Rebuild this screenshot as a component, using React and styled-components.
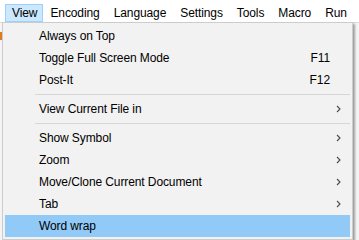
import React from "react";
import styled, { createGlobalStyle } from "styled-components";

const GlobalStyle = createGlobalStyle`
  html, body {
    margin: 0;
    padding: 0;
    background: #ffffff;
  }
  body {
    font-family: "Segoe UI", "Liberation Sans", Arial, sans-serif;
    font-size: 12px;
    color: #000;
  }
`;

// Whole window area
const Screen = styled.div`
  position: relative;
  width: 359px;
  height: 240px;
  overflow: hidden;
  background: #ffffff;
`;

// Top menu bar
const MenuBar = styled.div`
  display: flex;
  align-items: center;
  height: 22px;
  padding-left: 5px;
  background: #ffffff;
`;

const BarItem = styled.div`
  display: flex;
  align-items: center;
  height: 18px;
  margin-top: 3px;
  padding: 0 ${(p) => (p.$open ? 5 : 6)}px 0 6px;
  box-sizing: border-box;
  border: 1px solid ${(p) => (p.$open ? "#99d1ff" : "transparent")};
  background: ${(p) => (p.$open ? "#cce8ff" : "transparent")};
  white-space: nowrap;
  letter-spacing: -0.1px;
`;

// What lies behind the open menu
const Workspace = styled.div`
  height: 218px;
  background: #f4f4f4;
  border-top: 1px solid #dadada;
`;

const ToolbarBit = styled.div`
  width: 2px;
  height: 8px;
  margin-top: 9px;
  background: #e07a1f;
`;

// Dropdown menu
const Dropdown = styled.div`
  position: absolute;
  left: 2px;
  top: 22px;
  width: 351px;
  box-sizing: border-box;
  padding: 2px;
  background: #f2f2f2;
  border: 1px solid #cccccc;
  box-shadow: 2px 2px 2px rgba(0, 0, 0, 0.35);
`;

const Item = styled.div`
  display: grid;
  grid-template-columns: 1fr auto 19px;
  align-items: center;
  height: 22px;
  padding-left: 34px;
  background: ${(p) => (p.$active ? "#91c9f7" : "transparent")};
  white-space: nowrap;
  letter-spacing: -0.1px;
`;

const Shortcut = styled.span`
  padding-right: 1px;
`;

const Arrow = styled.span`
  display: flex;
  align-items: center;
  padding-left: 5px;
  color: #444;
`;

const Separator = styled.div`
  height: 7px;
  padding: 3px 0 0 30px;
  box-sizing: border-box;
  &::after {
    content: "";
    display: block;
    height: 1px;
    background: #d7d7d7;
  }
`;

const Chevron = () => (
  <svg width="5" height="8" viewBox="0 0 5 8">
    <path d="M1 1 L4 4 L1 7" fill="none" stroke="#4a4a4a" strokeWidth="1.1" />
  </svg>
);

const barItems = ["View", "Encoding", "Language", "Settings", "Tools", "Macro", "Run"];

const menu = [
  { label: "Always on Top" },
  { label: "Toggle Full Screen Mode", key: "F11" },
  { label: "Post-It", key: "F12" },
  { sep: true },
  { label: "View Current File in", sub: true },
  { sep: true },
  { label: "Show Symbol", sub: true },
  { label: "Zoom", sub: true },
  { label: "Move/Clone Current Document", sub: true },
  { label: "Tab", sub: true },
  { label: "Word wrap", active: true },
];

const App = () => {
  return (
    <Screen>
      <GlobalStyle />
      <MenuBar>
        {barItems.map((name, i) => (
          <BarItem key={name} $open={i === 0}>
            {name}
          </BarItem>
        ))}
      </MenuBar>
      <Workspace>
        <ToolbarBit />
      </Workspace>
      <Dropdown>
        {menu.map((m, i) =>
          m.sep ? (
            <Separator key={i} />
          ) : (
            <Item key={i} $active={m.active}>
              <span>{m.label}</span>
              <Shortcut>{m.key || ""}</Shortcut>
              <Arrow>{m.sub ? <Chevron /> : null}</Arrow>
            </Item>
          )
        )}
      </Dropdown>
    </Screen>
  );
};

export default App;
